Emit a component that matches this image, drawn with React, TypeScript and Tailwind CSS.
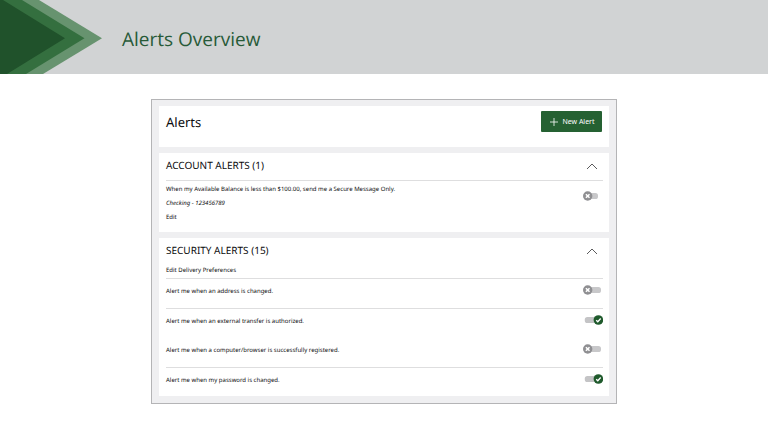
import React from 'react';

interface ToggleProps {
  label: string;
  defaultOn?: boolean;
  short?: boolean;
}

const Toggle: React.FC<ToggleProps> = ({ label, defaultOn = false, short = false }) => {
  const [on, setOn] = React.useState(defaultOn);

  return (
    <label className="relative block h-3 w-5 shrink-0 cursor-pointer">
      <input
        type="checkbox"
        aria-label={label}
        checked={on}
        onChange={(e) => setOn(e.target.checked)}
        className="absolute inset-0 h-3 w-5 cursor-pointer opacity-0"
      />
      <svg viewBox="0 0 20 12" className="block h-3 w-5" aria-hidden="true">
        {on ? (
          <>
            <rect x="1.8" y="3" width="14" height="6" rx="2.6" fill="#c4c4c6" />
            <circle cx="15.4" cy="6" r="4.8" fill="#1f5a2c" />
            <path d="M13.2 6.3l1.6 1.5 2.9-3.3" fill="none" stroke="#fff" strokeWidth="1.3" />
          </>
        ) : (
          <>
            <rect x="5" y="3" width={short ? 10 : 13} height="6" rx="2.6" fill="#c8c8ca" />
            <circle cx="4.7" cy="6" r="4.7" fill="#8f8f92" />
            <path d="M2.9 4.2l3.6 3.6M6.5 4.2L2.9 7.8" fill="none" stroke="#fff" strokeWidth="1.5" />
          </>
        )}
      </svg>
    </label>
  );
};

interface SectionHeaderProps {
  title: string;
}

const SectionHeader: React.FC<SectionHeaderProps> = ({ title }) => (
  <div className="flex h-6 items-center justify-between">
    <h3 className="text-[10px] leading-6">{title}</h3>
    <button type="button" aria-label={`Collapse ${title}`} className="mr-[5px] cursor-pointer pt-px">
      <svg viewBox="0 0 12 8" className="block h-2 w-3" aria-hidden="true">
        <path d="M1 7l5-5 5 5" fill="none" stroke="#48484a" strokeWidth="0.9" />
      </svg>
    </button>
  </div>
);

const securityAlerts = [
  { text: 'Alert me when an address is changed.', on: false, row: 'h-[30px] border-b' },
  { text: 'Alert me when an external transfer is authorized.', on: true, row: 'h-[29px]' },
  { text: 'Alert me when a computer/browser is successfully registered.', on: false, row: 'h-[30px] border-b' },
  { text: 'Alert me when my password is changed.', on: true, row: 'h-[28px]' },
];

const App: React.FC = () => {
  return (
    <div className="min-h-screen bg-white font-['Noto_Sans','Open_Sans',sans-serif] text-[#0c0c0e] [text-rendering:geometricPrecision]">
      <header className="flex h-[74px] items-center bg-[#d1d3d4] font-['Open_Sans','Noto_Sans',sans-serif]">
        <svg viewBox="0 0 102 74" className="h-[74px] w-[102px] shrink-0" aria-hidden="true">
          <path d="M0 0H39L102 38.3L43 74H0Z" fill="#67936f" />
          <path d="M0 0H22L84.5 38.3L26 74H0Z" fill="#346f3f" />
          <path d="M0 0H3L65 38.3L7 74H0Z" fill="#20522b" />
        </svg>
        <h1 className="ml-5 pt-1 text-[19px] leading-7 text-[#275a38]">Alerts Overview</h1>
      </header>

      <main className="mx-auto mt-[25px] flex w-full max-w-[466px] flex-col gap-1.5 border border-[#b4b4b6] bg-[#efeff1] px-[7px] pt-1.5 pb-[7px]">
        <section className="flex items-start justify-between bg-white pt-[5px] pr-[7px] pb-[15px] pl-[7px]">
          <h2 className="pt-px text-[13px] leading-5">Alerts</h2>
          <button
            type="button"
            className="flex h-[21px] w-[61px] cursor-pointer items-center justify-center gap-1 rounded-[1px] bg-[#256132] pl-0.5 text-[7px] leading-[14px] text-white"
          >
            <svg viewBox="0 0 8 8" className="h-2 w-2" aria-hidden="true">
              <path d="M4 0v8M0 4h8" stroke="#fff" strokeWidth="0.8" />
            </svg>
            <span>New Alert</span>
          </button>
        </section>

        <section className="bg-white pr-1.5 pb-2 pl-[7px]">
          <SectionHeader title="ACCOUNT ALERTS (1)" />
          <div className="mt-[3px] flex items-start justify-between border-t border-[#dededf] pt-px text-[6px] leading-[14px]">
            <div>
              <p>When my Available Balance is less than $100.00, send me a Secure Message Only.</p>
              <p className="italic">Checking - 123456789</p>
              <a href="#edit">Edit</a>
            </div>
            <div className="pt-2">
              <Toggle label="Available balance alert" short />
            </div>
          </div>
        </section>

        <section className="bg-white pr-1.5 pl-[7px]">
          <SectionHeader title="SECURITY ALERTS (15)" />
          <div className="flex h-[17px] border-b border-[#dededf] pt-px text-[6px] leading-[14px]">
            <a href="#delivery">Edit Delivery Preferences</a>
          </div>
          <ul>
            {securityAlerts.map((alert) => (
              <li
                key={alert.text}
                className={`flex items-start justify-between border-[#dededf] pt-[5px] text-[6px] leading-[14px] ${alert.row}`}
              >
                <span>{alert.text}</span>
                <Toggle label={alert.text} defaultOn={alert.on} />
              </li>
            ))}
          </ul>
        </section>
      </main>
    </div>
  );
};

export default App;
